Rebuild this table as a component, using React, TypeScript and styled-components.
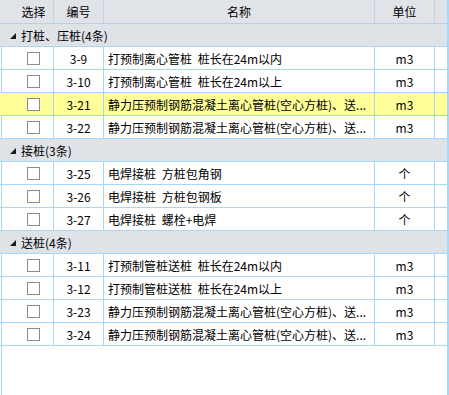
import styled, { createGlobalStyle } from "styled-components";

const GlobalStyle = createGlobalStyle`
  html, body {
    margin: 0;
    padding: 0;
    background: #ffffff;
  }
  body {
    font-family: "Noto Sans CJK SC", "Noto Sans", sans-serif;
    font-size: 12px;
    color: #000000;
  }
`;

const COLS = "54px 50px 271px 60px 12px";
const LINE = "#a9d8f7";

const Frame = styled.div`
  width: 449px;
  height: 395px;
  box-sizing: border-box;
  border-right: 2px solid ${LINE};
  display: flex;
  flex-direction: column;
  overflow: hidden;
`;

const HeaderRow = styled.div`
  display: grid;
  grid-template-columns: ${COLS};
  height: 24px;
  box-sizing: border-box;
  background: #e0e3e8;
  border-bottom: 1px solid #bccfe0;
`;

const HeaderCell = styled.div<{ $pad?: number; $last?: boolean }>`
  display: flex;
  align-items: center;
  justify-content: center;
  padding-left: ${(p) => p.$pad || 0}px;
  border-right: ${(p) => (p.$last ? "none" : "1px solid #c6d3df")};
`;

const Body = styled.div`
  flex: 1;
  background: linear-gradient(
    to right,
    transparent 1px,
    ${LINE} 1px,
    ${LINE} 2px,
    transparent 2px
  );
`;

const GroupRow = styled.div`
  height: 23px;
  box-sizing: border-box;
  background: #dfe2e7;
  border-bottom: 1px solid ${LINE};
  display: flex;
  align-items: center;
  padding-left: 10px;
  gap: 5px;
`;

const Caret = styled.svg`
  width: 6px;
  height: 6px;
  margin-top: 1px;
`;

const DataRow = styled.div<{ $hl?: boolean }>`
  display: grid;
  grid-template-columns: ${COLS};
  height: 23px;
  box-sizing: border-box;
  border-bottom: 1px solid ${LINE};
  background: ${(p) => (p.$hl ? "#ffff99" : "transparent")};
`;

const Cell = styled.div<{ $align?: string; $last?: boolean }>`
  display: flex;
  align-items: center;
  justify-content: ${(p) => p.$align || "center"};
  min-width: 0;
  border-right: ${(p) => (p.$last ? "none" : `1px solid ${LINE}`)};
`;

const CheckCell = styled(Cell)`
  padding-left: 14px;
`;

const NameCell = styled(Cell)`
  padding: 0 4px;
  overflow: hidden;
`;

const NameText = styled.span`
  white-space: nowrap;
  overflow: hidden;
  text-overflow: ellipsis;
  word-spacing: 3px;
`;

const Box = styled.span`
  width: 13px;
  height: 13px;
  box-sizing: border-box;
  border: 1px solid #8c8c8c;
  background: #ffffff;
  margin-top: 1px;
`;

// the list shows the long name already cut short
const PRESS = "静力压预制钢筋混凝土离心管桩(空心方桩)、送...";

const groups = [
  {
    title: "打桩、压桩(4条)",
    rows: [
      { code: "3-9", name: "打预制离心管桩 桩长在24m以内", unit: "m3" },
      { code: "3-10", name: "打预制离心管桩 桩长在24m以上", unit: "m3" },
      { code: "3-21", name: PRESS, unit: "m3", hl: true },
      { code: "3-22", name: PRESS, unit: "m3" },
    ],
  },
  {
    title: "接桩(3条)",
    rows: [
      { code: "3-25", name: "电焊接桩 方桩包角钢", unit: "个" },
      { code: "3-26", name: "电焊接桩 方桩包钢板", unit: "个" },
      { code: "3-27", name: "电焊接桩 螺栓+电焊", unit: "个" },
    ],
  },
  {
    title: "送桩(4条)",
    rows: [
      { code: "3-11", name: "打预制管桩送桩 桩长在24m以内", unit: "m3" },
      { code: "3-12", name: "打预制管桩送桩 桩长在24m以上", unit: "m3" },
      { code: "3-23", name: PRESS, unit: "m3" },
      { code: "3-24", name: PRESS, unit: "m3" },
    ],
  },
];

export default function App() {
  return (
    <>
      <GlobalStyle />
      <Frame>
        <HeaderRow>
          <HeaderCell $pad={14}>选择</HeaderCell>
          <HeaderCell>编号</HeaderCell>
          <HeaderCell>名称</HeaderCell>
          <HeaderCell>单位</HeaderCell>
          <HeaderCell $last />
        </HeaderRow>
        <Body>
          {groups.map((g) => (
            <div key={g.title}>
              <GroupRow>
                <Caret viewBox="0 0 6 6">
                  <polygon points="0,6 6,0 6,6" fill="#1a1a1a" />
                </Caret>
                {g.title}
              </GroupRow>
              {g.rows.map((r) => (
                <DataRow key={r.code} $hl={r.hl}>
                  <CheckCell>
                    <Box />
                  </CheckCell>
                  <Cell>{r.code}</Cell>
                  <NameCell $align="flex-start">
                    <NameText>{r.name}</NameText>
                  </NameCell>
                  <Cell>{r.unit}</Cell>
                  <Cell $last />
                </DataRow>
              ))}
            </div>
          ))}
        </Body>
      </Frame>
    </>
  );
}
